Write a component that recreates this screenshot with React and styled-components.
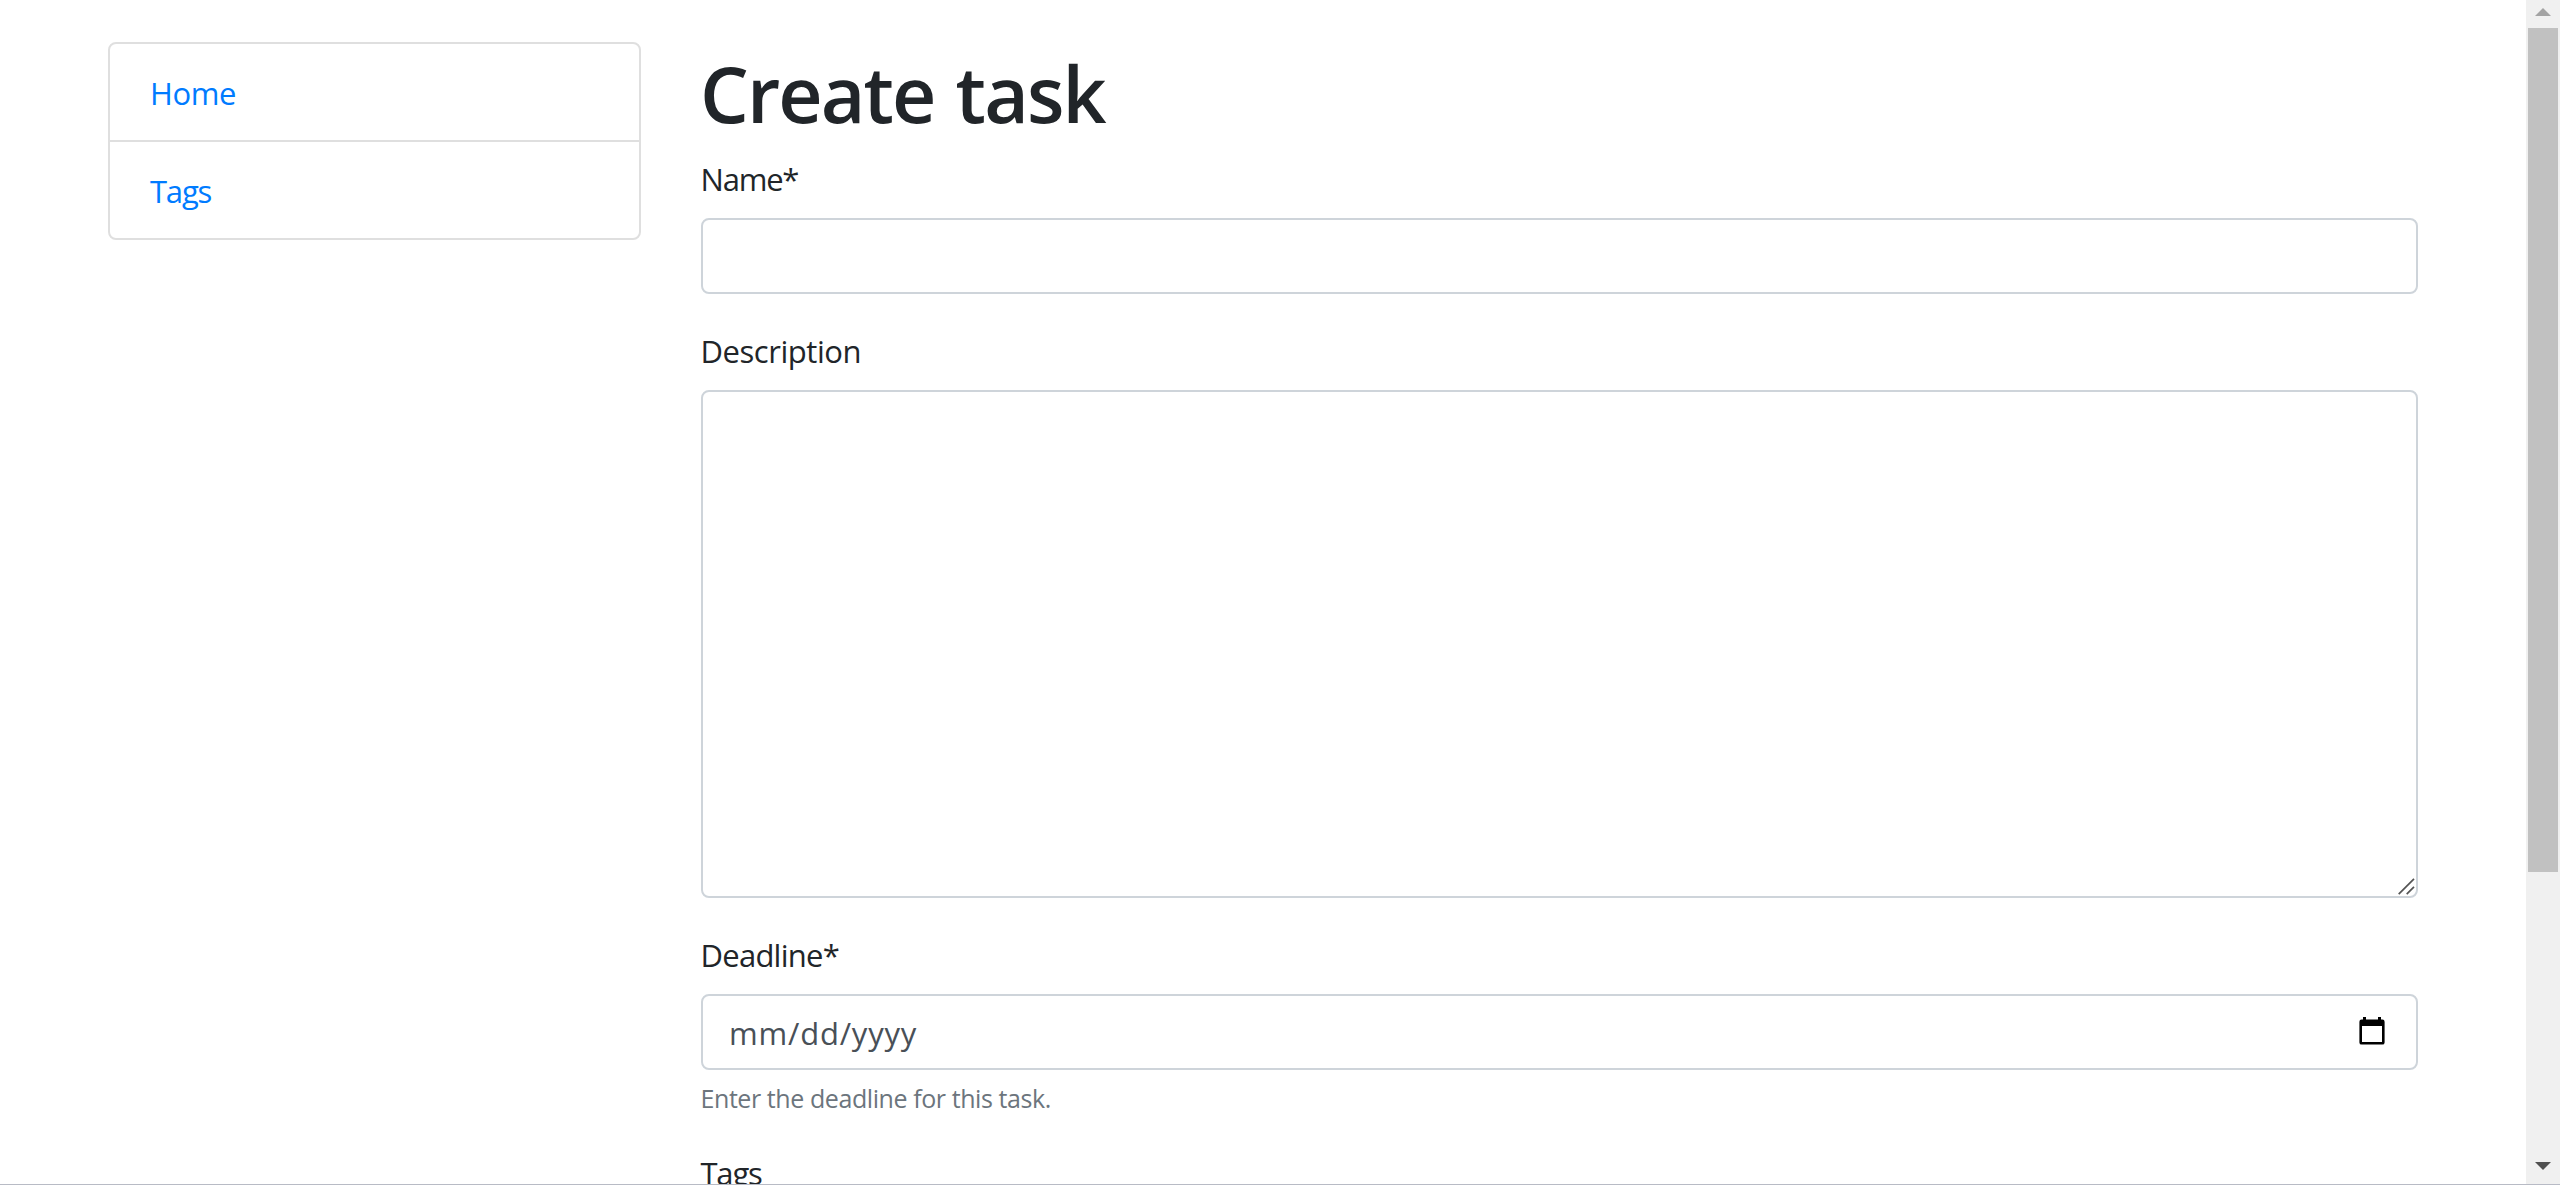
import React from "react";
import styled, { createGlobalStyle } from "styled-components";

const GlobalStyle = createGlobalStyle`
  *, *::before, *::after { box-sizing: border-box; }
  html { font-size: 32px; }
  body {
    margin: 0;
    overflow: hidden;
    background: #fff;
    color: #212529;
    font-family: "Segoe UI", "Open Sans", "Noto Sans", sans-serif;
    font-size: 31px;
    line-height: 48px;
  }
`;

const Window = styled.div`
  display: flex;
  height: 1185px;
  overflow: hidden;
  border-bottom: 1px solid #b8bbc5;
`;

const Page = styled.main`
  flex: 1;
  display: flex;
  align-items: flex-start;
  gap: 60px;
  min-width: 0;
  height: 1184px;
  overflow: hidden;
  padding: 42px 108px 0;
`;

const Sidebar = styled.nav`
  flex: 0 0 533px;
  border: 2px solid #dfdfdf;
  border-radius: 8px;
`;

const SidebarItem = styled.div`
  height: ${(p) => (p.$last ? 96 : 98)}px;
  padding: 24px 40px;
  line-height: 50px;
  border-bottom: ${(p) => (p.$last ? "0" : "2px solid #dfdfdf")};
`;

const SidebarLink = styled.a`
  color: #007bff;
  text-decoration: none;
  letter-spacing: ${(p) => p.$spacing}px;
`;

const Form = styled.form`
  flex: 0 0 1717px;
  display: flex;
  flex-direction: column;
`;

const Title = styled.h1`
  height: 96px;
  margin: 0 0 16px -1px;
  font-size: 77px;
  font-weight: 600;
  line-height: 104px;
  letter-spacing: -1.9px;
  word-spacing: 3px;
`;

const Group = styled.div`
  display: flex;
  flex-direction: column;
  margin-bottom: 32px;
`;

const Label = styled.label`
  height: 48px;
  margin: 0 0 16px -0.5px;
  line-height: 50px;
  letter-spacing: ${(p) => p.$spacing}px;
`;

const Control = styled.div`
  position: relative;
  display: flex;
  align-items: center;
  justify-content: space-between;
  height: ${(p) => p.$height}px;
  padding: 0 31px 0 26px;
  color: #495057;
  background: #fff;
  border: 2px solid #ced4da;
  border-radius: 8px;
`;

const DateText = styled.span`
  padding-top: 2px;
  letter-spacing: 0.8px;
`;

const CalendarIcon = styled.svg`
  width: 26px;
  height: 28px;
  margin-bottom: 2px;
`;

const ResizeGrip = styled.svg`
  position: absolute;
  right: 1px;
  bottom: 1px;
  width: 17px;
  height: 17px;
`;

const HelpText = styled.small`
  height: 38.4px;
  margin: 8px 0 0 -0.5px;
  color: #6c757d;
  font-size: 25px;
  line-height: 40px;
  letter-spacing: -0.42px;
`;

const Scrollbar = styled.div`
  flex: 0 0 34px;
  display: flex;
  flex-direction: column;
  align-items: center;
  height: 1184px;
  background: #f0f0f0;
`;

const ScrollArrow = styled.svg`
  width: 16px;
  height: 8px;
  margin: ${(p) => (p.$down ? "auto 0 14px" : "8px 0 12px")};
  fill: ${(p) => (p.$down ? "#505050" : "#a3a3a3")};
`;

const ScrollThumb = styled.div`
  width: 30px;
  height: 844px;
  background: #c1c1c1;
`;

export default function App() {
  return (
    <>
      <GlobalStyle />
      <Window>
        <Page>
          <Sidebar>
            <SidebarItem>
              <SidebarLink href="#" $spacing={-0.4}>Home</SidebarLink>
            </SidebarItem>
            <SidebarItem $last>
              <SidebarLink href="#" $spacing={-1.2}>Tags</SidebarLink>
            </SidebarItem>
          </Sidebar>
          <Form>
            <Title>Create task</Title>
            <Group>
              <Label $spacing={-1.2}>Name*</Label>
              <Control $height={76} />
            </Group>
            <Group>
              <Label $spacing={-0.45}>Description</Label>
              <Control $height={508}>
                <ResizeGrip viewBox="0 0 17 17" stroke="#555" strokeWidth="1.7">
                  <path d="M.7 16.2 16 .9M8.7 16.2 16 8.9" />
                </ResizeGrip>
              </Control>
            </Group>
            <Group>
              <Label $spacing={-0.75}>Deadline*</Label>
              <Control $height={76}>
                <DateText>mm/dd/yyyy</DateText>
                <CalendarIcon viewBox="0 0 26 28">
                  <path
                    fill="#000"
                    fillRule="evenodd"
                    d="M4 0h3v2.6h12V0h3v2.6h1.4A2.2 2.2 0 0 1 25.6 4.8v20.6a2.2 2.2 0 0 1-2.2 2.2H2.6A2.2 2.2 0 0 1 .4 25.4V4.8A2.2 2.2 0 0 1 2.6 2.6H4ZM3 9v16h20V9Z"
                  />
                </CalendarIcon>
              </Control>
              <HelpText>Enter the deadline for this task.</HelpText>
            </Group>
            <Group>
              <Label $spacing={-1.2}>Tags</Label>
            </Group>
          </Form>
        </Page>
        <Scrollbar>
          <ScrollArrow viewBox="0 0 16 8"><path d="M0 8 8 0l8 8Z" /></ScrollArrow>
          <ScrollThumb />
          <ScrollArrow $down viewBox="0 0 16 8"><path d="m0 0 8 8 8-8Z" /></ScrollArrow>
        </Scrollbar>
      </Window>
    </>
  );
}
